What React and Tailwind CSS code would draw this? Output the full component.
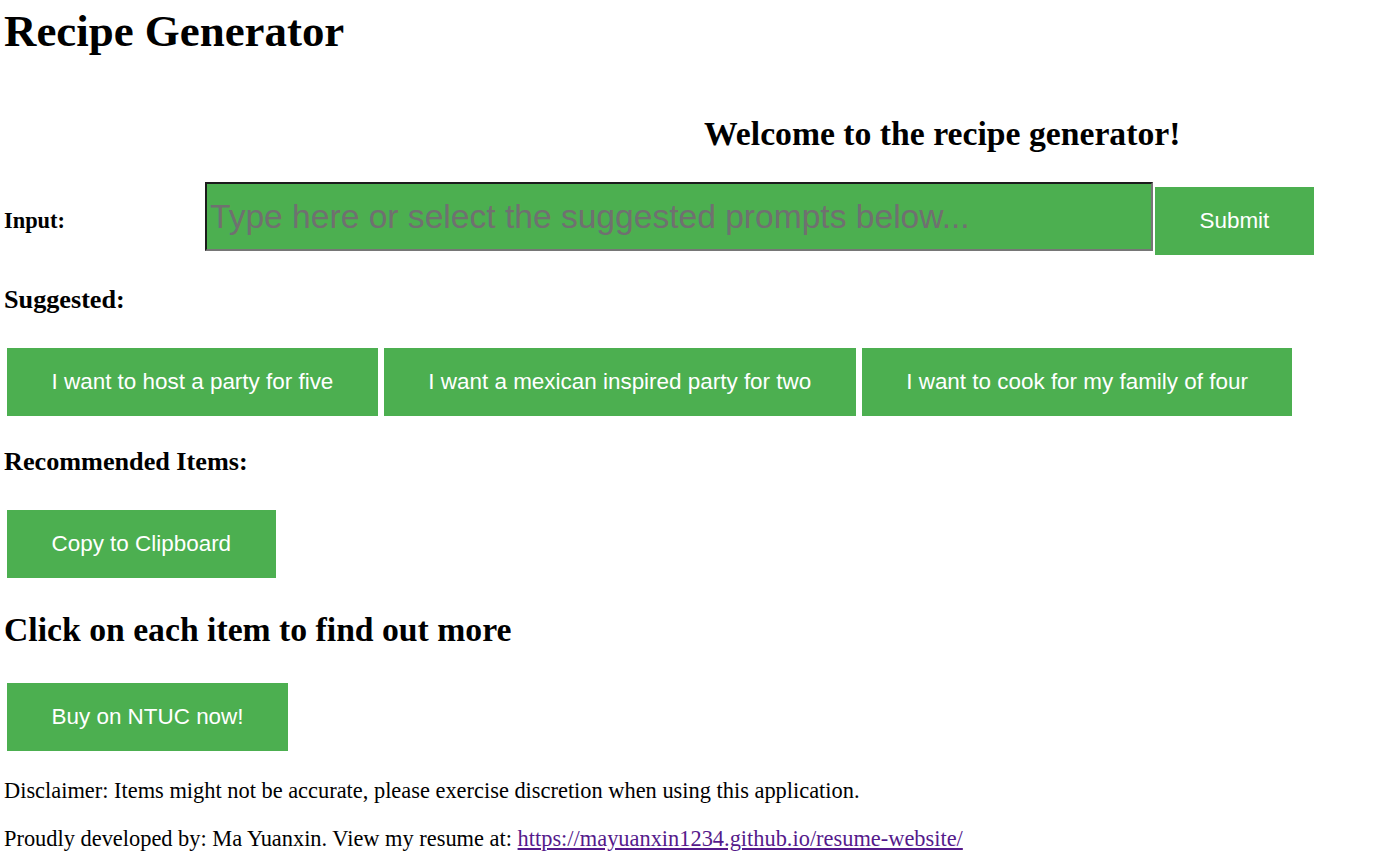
import { useState } from "react";

const SUGGESTED = [
  "I want to host a party for five",
  "I want a mexican inspired party for two",
  "I want to cook for my family of four",
];

const btn =
  "bg-[#4CAF50] text-white font-['Liberation_Sans',Arial,sans-serif] text-[22.45px] leading-[68px] h-[68px] px-[44.5px] whitespace-nowrap cursor-pointer";

export default function App() {
  const [prompt, setPrompt] = useState("");

  return (
    <div className="min-h-screen bg-white text-black font-['Liberation_Serif','Times_New_Roman',serif] pl-[4px] pt-[5px]">
      {/* TITLE */}
      <h1 className="text-[44.9px] font-bold leading-[52px]">Recipe Generator</h1>

      <h2 className="mt-[58px] ml-[700px] text-[33.7px] font-bold leading-[38px] whitespace-nowrap">
        Welcome to the recipe generator!
      </h2>

      {/* INPUT ROW */}
      <div className="mt-[29px] flex items-start">
        <label className="w-[201px] mt-[25.5px] text-[22.4px] font-bold leading-[26px]">Input:</label>
        <input
          value={prompt}
          onChange={(e) => setPrompt(e.target.value)}
          placeholder="Type here or select the suggested prompts below..."
          className="w-[948px] h-[69px] px-[3px] bg-[#4CAF50] border-2 border-t-[#1c1c1c] border-l-[#1c1c1c] border-r-[#767676] border-b-[#767676] font-['Liberation_Sans',Arial,sans-serif] text-[33.6px] leading-[38px] text-black placeholder:text-[#707070] outline-none"
        />
        <button className={btn + " ml-[2px] mt-[5px]"}>Submit</button>
      </div>

      {/* SUGGESTED */}
      <h3 className="mt-[30px] text-[26.2px] font-bold leading-[30px]">Suggested:</h3>
      <div className="mt-[33px] flex gap-[6px] pl-[3px]">
        {SUGGESTED.map((s) => (
          <button key={s} onClick={() => setPrompt(s)} className={btn}>
            {s}
          </button>
        ))}
      </div>

      {/* RECOMMENDED */}
      <h3 className="mt-[31px] text-[26.2px] font-bold leading-[30px]">Recommended Items:</h3>
      <div className="mt-[33px] pl-[3px]">
        <button className={btn}>Copy to Clipboard</button>
      </div>

      <h2 className="mt-[32.5px] text-[33.7px] font-bold leading-[38px]">
        Click on each item to find out more
      </h2>
      <div className="mt-[34.5px] pl-[3px]">
        <button className={btn}>Buy on NTUC now!</button>
      </div>

      {/* FOOTER */}
      <p className="mt-[26.5px] text-[22.4px] leading-[26px]">
        Disclaimer: Items might not be accurate, please exercise discretion when using this application.
      </p>
      <p className="mt-[22.5px] text-[22.4px] leading-[26px]">
        Proudly developed by: Ma Yuanxin. View my resume at:{" "}
        <a href="#" className="text-[#551A8B] underline">
          https://mayuanxin1234.github.io/resume-website/
        </a>
      </p>
    </div>
  );
}
